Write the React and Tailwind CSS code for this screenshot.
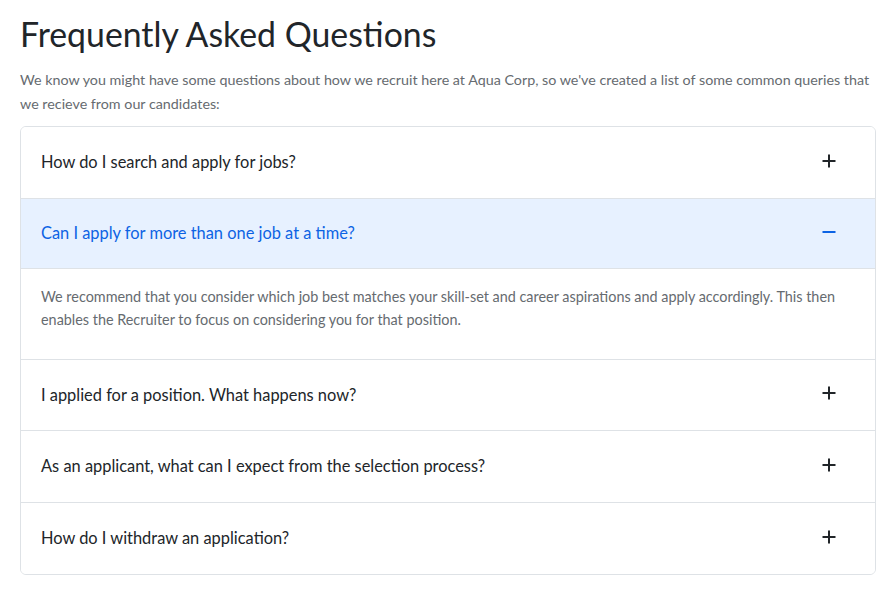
import React, { useState } from "react";

const items = [
  { q: "How do I search and apply for jobs?", a: "", h: "h-[71px]" },
  {
    q: "Can I apply for more than one job at a time?",
    a: "We recommend that you consider which job best matches your skill-set and career aspirations and apply accordingly. This then enables the Recruiter to focus on considering you for that position.",
    h: "h-[70px]",
  },
  { q: "I applied for a position. What happens now?", a: "", h: "h-[70px]" },
  { q: "As an applicant, what can I expect from the selection process?", a: "", h: "h-[71px]" },
  { q: "How do I withdraw an application?", a: "", h: "h-[71px]" },
];

function Plus() {
  return (
    <svg width="14" height="14" viewBox="0 0 14 14" className="shrink-0">
      <path d="M7 0.5V13.5M0.5 7H13.5" stroke="#212529" strokeWidth="2" />
    </svg>
  );
}

function Minus() {
  return (
    <svg width="14" height="14" viewBox="0 0 14 14" className="shrink-0">
      <path d="M0.5 7H13.5" stroke="#0c63e4" strokeWidth="2" />
    </svg>
  );
}

export default function App() {
  const [open, setOpen] = useState(1);
  return (
    <div
      className="min-h-[591px] bg-white px-5 pt-[13px]"
      style={{ fontFamily: "Lato, 'Noto Sans', sans-serif" }}
    >
      <h1 className="text-[33.8px] leading-[42px] text-[#212529] font-normal">
        Frequently Asked Questions
      </h1>
      <p className="mt-[13px] text-[14.3px] leading-[24px] text-[#666b70]">
        We know you might have some questions about how we recruit here at Aqua Corp, so we've created a list of some common queries that we recieve from our candidates:
      </p>
      <div className="mt-[10px] w-[856px] rounded-[6px] border border-[#dee2e6] overflow-hidden">
        {items.map((it, i) => {
          const isOpen = open === i;
          const last = i === items.length - 1;
          return (
            <div key={i} className={last ? "" : "border-b border-[#dee2e6]"}>
              <button
                onClick={() => setOpen(isOpen ? -1 : i)}
                className={
                  "flex w-full items-center justify-between pl-5 pr-[39px] text-left text-[16.4px] " +
                  it.h +
                  " " +
                  (isOpen
                    ? "bg-[#e7f1ff] text-[#0c63e4] border-b border-[#dee2e6]"
                    : "bg-white text-[#212529]")
                }
              >
                <span>{it.q}</span>
                <span className="-mt-1">{isOpen ? <Minus /> : <Plus />}</span>
              </button>
              {isOpen && (
                <div className="px-5 pt-4 pb-[28px] text-[14.4px] leading-[23px] text-[#666b70]">
                  {it.a}
                </div>
              )}
            </div>
          );
        })}
      </div>
    </div>
  );
}
